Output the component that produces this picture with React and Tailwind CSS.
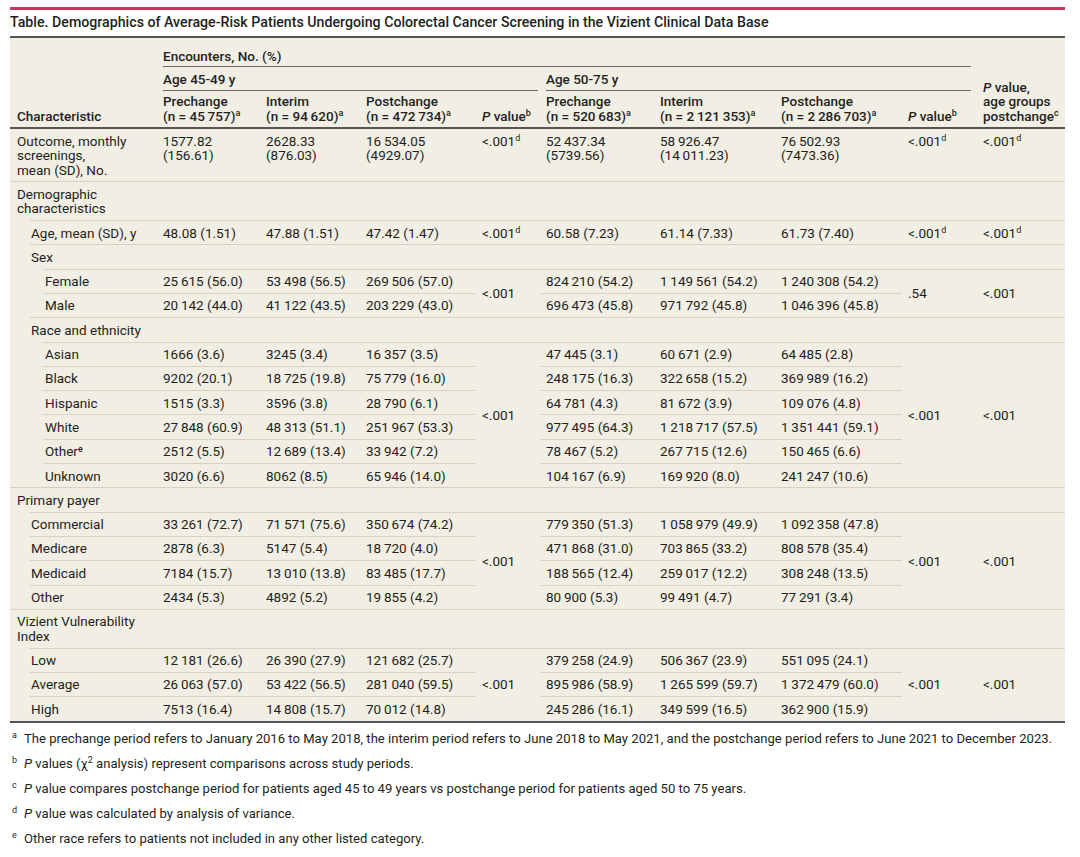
import React from 'react';

const fix = (s) => s.replace(/(\d) (?=\d)/g, '$1\u2009');

const LVL = {
  0: 'ml-0 pl-[7px]',
  1: 'ml-[20px] pl-[1px]',
  2: 'ml-[33px] pl-[2px]',
};

function Lab({ lvl = 0, first, children }) {
  return (
    <td className="p-0 align-top">
      <div
        className={`${first ? 'border-t-2 border-[#555]' : 'border-t border-[#d6d1c3]'} ${LVL[lvl]} pt-[4.5px] pb-[4.3px] whitespace-nowrap`}
      >
        {children}
      </div>
    </td>
  );
}

function D({ children, first }) {
  return (
    <td
      className={`${first ? 'border-t-2 border-[#555]' : 'border-t border-[#d6d1c3]'} pl-[6px] pr-0 pt-[4.5px] pb-[4.3px] align-top whitespace-nowrap`}
    >
      {typeof children === 'string' ? fix(children) : children}
    </td>
  );
}

function P({ span = 1, children, first }) {
  return (
    <td
      rowSpan={span}
      className={`${first ? 'border-t-2 border-[#555] align-top' : 'border-t border-[#d6d1c3] align-middle'} pl-[6px] pr-0 pt-[4.5px] pb-[4.3px] whitespace-nowrap`}
    >
      {children}
    </td>
  );
}

const Lt = () => <span>&lt;.001</span>;
const LtD = () => (
  <span>
    &lt;.001<sup className="text-[9px] top-[-0.5em]">d</sup>
  </span>
);

function Section({ lvl, children }) {
  return (
    <tr>
      <Lab lvl={lvl}>{children}</Lab>
      {Array.from({ length: 9 }).map((_, i) => (
        <D key={i}>{''}</D>
      ))}
    </tr>
  );
}

function GroupRows({ lvl, rows, p1, p2, p3 }) {
  return rows.map((r, i) => (
    <tr key={i}>
      <Lab lvl={lvl}>{r[0]}</Lab>
      <D>{r[1]}</D>
      <D>{r[2]}</D>
      <D>{r[3]}</D>
      {i === 0 && <P span={rows.length}>{p1}</P>}
      <D>{r[4]}</D>
      <D>{r[5]}</D>
      <D>{r[6]}</D>
      {i === 0 && <P span={rows.length}>{p2}</P>}
      {i === 0 && <P span={rows.length}>{p3}</P>}
    </tr>
  ));
}

const Sup = ({ children }) => <sup className="text-[9px] top-[-0.5em] font-medium">{children}</sup>;

function HeadCell({ title, n, sup = 'a' }) {
  return (
    <th className="text-left font-medium align-bottom pl-[6px] pt-[3.5px] pb-[4px] whitespace-nowrap">
      {title}
      <br />({fix(n)})<Sup>{sup}</Sup>
    </th>
  );
}

function PHead() {
  return (
    <th className="text-left font-medium align-bottom pl-[6px] pt-[3.5px] pb-[4px] whitespace-nowrap">
      <i>P</i> value<Sup>b</Sup>
    </th>
  );
}

function FootSup({ children }) {
  return (
    <span className="inline-block w-[14px] pl-[2px] text-[9px] leading-[0] relative top-[-5px]">{children}</span>
  );
}

export default function App() {
  return (
    <div className="bg-white w-[1080px] min-h-[857px] text-[#231f20] font-['Roboto',sans-serif] pt-[7px]">
      <div className="ml-[10px] w-[1055px] h-[3px] bg-[#c8365b]" />
      <div className="ml-[10px] mt-[3px] text-[14.2px] leading-[18px] font-medium">
        Table. Demographics of Average-Risk Patients Undergoing Colorectal Cancer Screening in the Vizient Clinical Data Base
      </div>
      <div className="ml-[10px] mt-[5px] w-[1055px] bg-[#f1eee4] border-y-2 border-[#555]">
        <table className="table-fixed w-[1055px] border-separate border-spacing-0 text-[13.5px] leading-[14.5px]">
          <colgroup>
            <col className="w-[147px]" />
            <col className="w-[103px]" />
            <col className="w-[100px]" />
            <col className="w-[116px]" />
            <col className="w-[64px]" />
            <col className="w-[114px]" />
            <col className="w-[121px]" />
            <col className="w-[127px]" />
            <col className="w-[75px]" />
            <col className="w-[88px]" />
          </colgroup>
          <thead>
            <tr>
              <th rowSpan={3} className="text-left font-medium align-bottom pl-[7px] pb-[4px]">
                Characteristic
              </th>
              <th colSpan={8} className="text-left font-medium align-bottom pl-[6px] pr-[6px] p-0">
                <div className="border-b border-[#6a6a6a] pt-[10.5px] pb-[2.5px]">Encounters, No. (%)</div>
              </th>
              <th rowSpan={3} className="text-left font-medium align-bottom pl-[6px] pb-[4px] whitespace-nowrap">
                <i>P</i> value,
                <br />
                age groups
                <br />
                postchange<Sup>c</Sup>
              </th>
            </tr>
            <tr>
              <th colSpan={4} className="text-left font-medium align-bottom pl-[6px] pr-[2px]">
                <div className="border-b border-[#6a6a6a] pt-[5.5px] pb-[3px]">Age 45-49 y</div>
              </th>
              <th colSpan={4} className="text-left font-medium align-bottom pl-[6px] pr-[6px]">
                <div className="border-b border-[#6a6a6a] pt-[5.5px] pb-[3px]">Age 50-75 y</div>
              </th>
            </tr>
            <tr>
              <HeadCell title="Prechange" n="n = 45 757" />
              <HeadCell title="Interim" n="n = 94 620" />
              <HeadCell title="Postchange" n="n = 472 734" />
              <PHead />
              <HeadCell title="Prechange" n="n = 520 683" />
              <HeadCell title="Interim" n="n = 2 121 353" />
              <HeadCell title="Postchange" n="n = 2 286 703" />
              <PHead />
            </tr>
          </thead>
          <tbody>
            <tr>
              <Lab first>
                Outcome, monthly
                <br />
                screenings,
                <br />
                mean (SD), No.
              </Lab>
              <D first>
                1577.82
                <br />
                (156.61)
              </D>
              <D first>
                2628.33
                <br />
                (876.03)
              </D>
              <D first>
                {fix('16 534.05')}
                <br />
                (4929.07)
              </D>
              <P first>
                <LtD />
              </P>
              <D first>
                {fix('52 437.34')}
                <br />
                (5739.56)
              </D>
              <D first>
                {fix('58 926.47')}
                <br />
                {fix('(14 011.23)')}
              </D>
              <D first>
                {fix('76 502.93')}
                <br />
                (7473.36)
              </D>
              <P first>
                <LtD />
              </P>
              <P first>
                <LtD />
              </P>
            </tr>
            <Section lvl={0}>
              Demographic
              <br />
              characteristics
            </Section>
            <tr>
              <Lab lvl={1}>Age, mean (SD), y</Lab>
              <D>48.08 (1.51)</D>
              <D>47.88 (1.51)</D>
              <D>47.42 (1.47)</D>
              <P>
                <LtD />
              </P>
              <D>60.58 (7.23)</D>
              <D>61.14 (7.33)</D>
              <D>61.73 (7.40)</D>
              <P>
                <LtD />
              </P>
              <P>
                <LtD />
              </P>
            </tr>
            <Section lvl={1}>Sex</Section>
            <GroupRows
              lvl={2}
              p1={<Lt />}
              p2=".54"
              p3={<Lt />}
              rows={[
                ['Female', '25 615 (56.0)', '53 498 (56.5)', '269 506 (57.0)', '824 210 (54.2)', '1 149 561 (54.2)', '1 240 308 (54.2)'],
                ['Male', '20 142 (44.0)', '41 122 (43.5)', '203 229 (43.0)', '696 473 (45.8)', '971 792 (45.8)', '1 046 396 (45.8)'],
              ]}
            />
            <Section lvl={1}>Race and ethnicity</Section>
            <GroupRows
              lvl={2}
              p1={<Lt />}
              p2={<Lt />}
              p3={<Lt />}
              rows={[
                ['Asian', '1666 (3.6)', '3245 (3.4)', '16 357 (3.5)', '47 445 (3.1)', '60 671 (2.9)', '64 485 (2.8)'],
                ['Black', '9202 (20.1)', '18 725 (19.8)', '75 779 (16.0)', '248 175 (16.3)', '322 658 (15.2)', '369 989 (16.2)'],
                ['Hispanic', '1515 (3.3)', '3596 (3.8)', '28 790 (6.1)', '64 781 (4.3)', '81 672 (3.9)', '109 076 (4.8)'],
                ['White', '27 848 (60.9)', '48 313 (51.1)', '251 967 (53.3)', '977 495 (64.3)', '1 218 717 (57.5)', '1 351 441 (59.1)'],
                [
                  <span key="o">
                    Other<Sup>e</Sup>
                  </span>,
                  '2512 (5.5)',
                  '12 689 (13.4)',
                  '33 942 (7.2)',
                  '78 467 (5.2)',
                  '267 715 (12.6)',
                  '150 465 (6.6)',
                ],
                ['Unknown', '3020 (6.6)', '8062 (8.5)', '65 946 (14.0)', '104 167 (6.9)', '169 920 (8.0)', '241 247 (10.6)'],
              ]}
            />
            <Section lvl={0}>Primary payer</Section>
            <GroupRows
              lvl={1}
              p1={<Lt />}
              p2={<Lt />}
              p3={<Lt />}
              rows={[
                ['Commercial', '33 261 (72.7)', '71 571 (75.6)', '350 674 (74.2)', '779 350 (51.3)', '1 058 979 (49.9)', '1 092 358 (47.8)'],
                ['Medicare', '2878 (6.3)', '5147 (5.4)', '18 720 (4.0)', '471 868 (31.0)', '703 865 (33.2)', '808 578 (35.4)'],
                ['Medicaid', '7184 (15.7)', '13 010 (13.8)', '83 485 (17.7)', '188 565 (12.4)', '259 017 (12.2)', '308 248 (13.5)'],
                ['Other', '2434 (5.3)', '4892 (5.2)', '19 855 (4.2)', '80 900 (5.3)', '99 491 (4.7)', '77 291 (3.4)'],
              ]}
            />
            <Section lvl={0}>
              Vizient Vulnerability
              <br />
              Index
            </Section>
            <GroupRows
              lvl={1}
              p1={<Lt />}
              p2={<Lt />}
              p3={<Lt />}
              rows={[
                ['Low', '12 181 (26.6)', '26 390 (27.9)', '121 682 (25.7)', '379 258 (24.9)', '506 367 (23.9)', '551 095 (24.1)'],
                ['Average', '26 063 (57.0)', '53 422 (56.5)', '281 040 (59.5)', '895 986 (58.9)', '1 265 599 (59.7)', '1 372 479 (60.0)'],
                ['High', '7513 (16.4)', '14 808 (15.7)', '70 012 (14.8)', '245 286 (16.1)', '349 599 (16.5)', '362 900 (15.9)'],
              ]}
            />
          </tbody>
        </table>
      </div>
      <div className="ml-[10px] mt-[8px] text-[13.1px] leading-[16px]">
        <div className="h-[16px] mb-[9px] whitespace-nowrap">
          <FootSup>a</FootSup>
          The prechange period refers to January 2016 to May 2018, the interim period refers to June 2018 to May 2021, and the postchange period refers to June 2021 to December 2023.
        </div>
        <div className="h-[16px] mb-[9px]">
          <FootSup>b</FootSup>
          <i>P</i> values (χ<sup className="text-[9px] leading-[0]">2</sup> analysis) represent comparisons across study periods.
        </div>
        <div className="h-[16px] mb-[9px]">
          <FootSup>c</FootSup>
          <i>P</i> value compares postchange period for patients aged 45 to 49 years vs postchange period for patients aged 50 to 75 years.
        </div>
        <div className="h-[16px] mb-[9px]">
          <FootSup>d</FootSup>
          <i>P</i> value was calculated by analysis of variance.
        </div>
        <div className="h-[16px] mb-[9px]">
          <FootSup>e</FootSup>
          Other race refers to patients not included in any other listed category.
        </div>
      </div>
    </div>
  );
}
